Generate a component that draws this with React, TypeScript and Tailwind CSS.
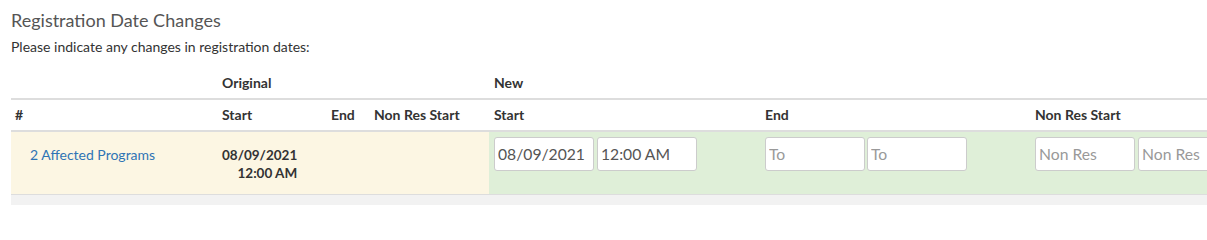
import React from "react";

const cols = "grid grid-cols-[206px_109px_43px_120px_271px_270px_270px]";

function DateInput({ value, placeholder }: { value?: string; placeholder?: string }) {
  return (
    <input
      type="text"
      defaultValue={value}
      placeholder={placeholder}
      className="h-[34px] w-[100px] rounded-[3px] border border-[#cccccc] bg-white px-[3px] text-[15.7px] text-[#555555] placeholder:text-[#999999] outline-none"
    />
  );
}

export default function App() {
  return (
    <div
      className="w-[1207px] h-[212px] overflow-hidden bg-white text-[#333333]"
      style={{ fontFamily: "Lato, 'Open Sans', sans-serif" }}
    >
      <div className="pl-[11px]">
        <h2 className="pt-[7px] text-[18px] leading-[26px] text-[#555555]">Registration Date Changes</h2>
        <p className="mt-[4px] text-[14px] leading-[20px] text-[#333333]">
          Please indicate any changes in registration dates:
        </p>

        <div className="w-[1289px]">
          {/* header row 1 */}
          <div className={`${cols} h-[43px] border-b-2 border-[#dddddd] text-[14px] font-bold leading-[20px]`}>
            <div />
            <div className="flex items-end pb-[5px] px-[5px]">Original</div>
            <div />
            <div />
            <div className="flex items-end pb-[5px] px-[5px]">New</div>
            <div />
            <div />
          </div>

          {/* header row 2 */}
          <div className={`${cols} h-[32px] border-b-2 border-[#dddddd] text-[14px] font-bold leading-[20px]`}>
            <div className="flex items-center px-[4px]">#</div>
            <div className="flex items-center px-[5px]">Start</div>
            <div className="flex items-center px-[5px]">End</div>
            <div className="flex items-center px-[5px] whitespace-nowrap">Non Res Start</div>
            <div className="flex items-center px-[5px]">Start</div>
            <div className="flex items-center px-[5px]">End</div>
            <div className="flex items-center px-[5px]">Non Res Start</div>
          </div>

          {/* data row */}
          <div className={`${cols} h-[63px] border-b border-[#dddddd]`}>
            <div className="bg-[#fcf6e3] pl-[19px] pt-[13px] text-[14px] leading-[20px]">
              <a href="#" className="text-[#2f74b5]">2 Affected Programs</a>
            </div>
            <div className="bg-[#fcf6e3] flex items-center px-[5px] pt-[1px]">
              <div className="flex flex-col items-end text-[13.5px] font-bold leading-[18px]">
                <span>08/09/2021</span>
                <span>12:00 AM</span>
              </div>
            </div>
            <div className="bg-[#fcf6e3]" />
            <div className="bg-[#fcf6e3]" />
            <div className="bg-[#dfefd8] flex gap-[3px] pl-[5px] pt-[5px]">
              <DateInput value="08/09/2021" />
              <DateInput value="12:00 AM" />
            </div>
            <div className="bg-[#dfefd8] flex gap-[2px] pl-[5px] pt-[5px]">
              <DateInput placeholder="To" />
              <DateInput placeholder="To" />
            </div>
            <div className="bg-[#dfefd8] flex gap-[3px] pl-[5px] pt-[5px]">
              <DateInput placeholder="Non Res" />
              <DateInput placeholder="Non Res" />
            </div>
          </div>

          <div className="h-[10px] bg-[#f2f2f2]" />
        </div>
      </div>
    </div>
  );
}
